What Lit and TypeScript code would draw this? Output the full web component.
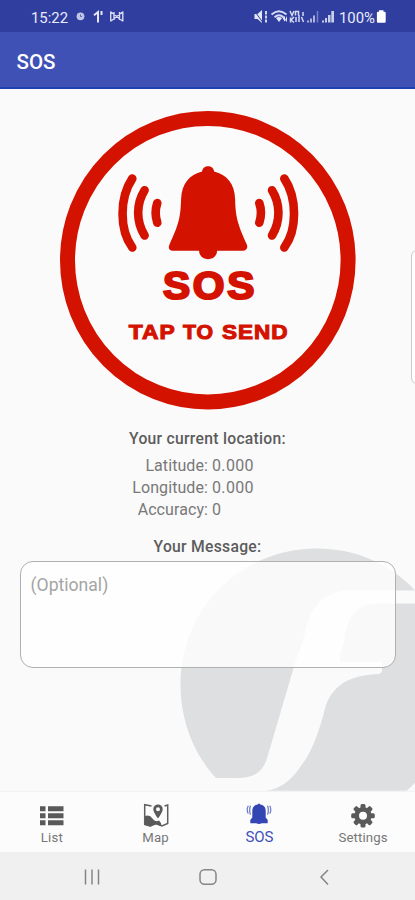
import { LitElement, html, css, svg } from "lit";
import { customElement, property } from "lit/decorators.js";
import { classMap } from "lit/directives/class-map.js";

@customElement("status-bar")
class StatusBar extends LitElement {
  static styles = css`
    :host { display: flex; height: 32px; background: #303f9f; color: #e8eaf8; }
    svg { display: block; width: 415px; height: 32px; }
    text { font: 400 15px Roboto, sans-serif; fill: #e9ebfa; }
  `;
  render() {
    return html`<svg viewBox="0 0 415 32" fill="#e4e7f8">
      <text x="31" y="22.5" textLength="37" lengthAdjust="spacingAndGlyphs">15:22</text>
      <circle cx="80.5" cy="16.3" r="3.9" opacity=".8" />
      <path d="M80.500 14.500v2h1.500" fill="none" stroke="#5966b4" />
      <path d="M94 15.2L98 12v10.5M101.5 11v4" fill="none" stroke="#e4e7f8" stroke-width="2" />
      <path d="M110.700 11.500v10M122.800 11.500v10M111 12l11.500 9M122.500 12L111 21M114 12v8M119.500 12v8" fill="none" stroke="#d5d9f1" stroke-width="1.4" />
      <path d="M254.500 14h3l4.500-4v13L257.500 19h-3z" />
      <path d="M254.500 11l8 11" stroke="#303f9f" stroke-width="1" fill="none" />
      <path d="M266 11v3.500M266 15.500v3M266 19.500v3" stroke="#e4e7f8" stroke-width="1.800" fill="none" />
      <path d="M271.500 14.500q7.500-6.500 15 0M274.500 17.200q4.500-4 9 0" stroke="#d5d9f1" stroke-width="1.900" fill="none" />
      <path d="M276 18q3-2 6 0l-3 4zM282.500 18l2.500-2v6zM287 16v6l-2-2z" />
      <path d="M290 11l2 4.500 2-4.500M295.500 15.500v-4h3v4M290.500 22.500v-5M291 20l3-3M291 20l3 2.500M296 17v5M299 15v7M301.500 17l2 5M303 12v4" stroke="#d5d9f1" stroke-width="1.500" fill="none" />
      <path d="M307 22.500h2v-2h-2zM310 22.500h2v-4h-2zM313 22.500h2v-7h-2z" opacity=".7" />
      <path d="M317.500 11v11.500" stroke="#7781c5" stroke-width="1.500" />
      <path d="M322 22.500h2v-2h-2zM325 22.500h2v-4.500h-2zM328 22.500h2.500v-7.500h-2.500zM331.300 22.500h2.700v-11.500h-2.700z" opacity=".85" />
      <text x="339" y="22.500" textLength="36" lengthAdjust="spacingAndGlyphs">100%</text>
      <path d="M379 10.300h4.500v1.500h1q1.200 0 1.200 1.200v8.800q0 1-1 1h-6.800q-1 0-1-1V13q0-1.200 1.200-1.200h.9z" fill="#fff" />
    </svg>`;
  }
}

@customElement("sos-button")
class SosButton extends LitElement {
  static styles = css`
    :host { display: block; width: 297px; height: 300px; }
    svg { display: block; overflow: visible; }
    text { font-family: "Liberation Sans", Arial, sans-serif; font-weight: 700; fill: #d41200; stroke: #d41200; }
    .big { font-size: 38.5px; stroke-width: 2.2px; letter-spacing: 2.5px; }
    .small { font-size: 20.8px; stroke-width: 1.1px; letter-spacing: .9px; }
  `;
  render() {
    const waves = svg`<path d="M132.500 178.500C119.500 198 119.500 230 132.500 247.500" />
      <path d="M144.800 190.200C136.200 204 136.200 221.500 144.800 235.500" />
      <path d="M157.500 203Q154.200 212.500 157.500 222.800" />`;
    return html`<svg width="297" height="300" viewBox="59.200 110 297 300" role="button" aria-label="SOS">
      <ellipse cx="208" cy="260.200" rx="140.300" ry="141.800" fill="#fbfbfb" stroke="#d41200" stroke-width="15" />
      <g fill="none" stroke="#d41200" stroke-width="8.600" stroke-linecap="round">
        ${waves}
        <g transform="translate(417 0) scale(-1 1)">${waves}</g>
      </g>
      <path fill="#d41200" d="M202.300 171.500C202.800 164.500 213.800 164.500 214.300 171.500C227 174.500 235 184 235.300 199C235.800 218 238 224 247 244.500C248.500 248 246.500 250.700 243 250.700H217.300C217 262 199.500 262 199.300 250.700H173C169.500 250.700 168 248 169.700 244.500C179 224 180.700 218 181.300 199C181.800 184 189.600 174.500 202.300 171.500Z" />
      <text class="big" x="163.200" y="298.600" textLength="94" lengthAdjust="spacingAndGlyphs">SOS</text>
      <text class="small" y="338.700"><tspan x="129" textLength="46.500" lengthAdjust="spacingAndGlyphs">TAP</tspan> <tspan x="183.300" textLength="31" lengthAdjust="spacingAndGlyphs">TO</tspan> <tspan x="222.300" textLength="66.500" lengthAdjust="spacingAndGlyphs">SEND</tspan></text>
    </svg>`;
  }
}

const icons: Record<string, unknown> = {
  list: svg`<path fill="#5a5a5a" d="M1 4.200h5.500v5H1zM9 4.200h15.500v5H9zM1 11.200h5.500v5H1zM9 11.200h15.500v5H9zM1 18.200h5.500v5H1zM9 18.200h15.500v5H9z" />`,
  map: svg`<path fill="none" stroke="#5f5f5f" stroke-width="1.500" d="M8.500 4L1.700 2.700V22.500L8 24.300M21.500 4L24.700 3V21.500L19 24L13 21.500" />
    <path fill="#5a5a5a" d="M2 14Q7 12.500 9.500 16.500T16 18.500Q18 20 18.500 24L13 22.500L8 24.500L2 22.700ZM15 2.400a4.700 4.700 0 0 1 4.700 4.700c0 3.500-4.700 9.500-4.700 9.500s-4.700-6-4.700-9.500A4.700 4.700 0 0 1 15 2.400zm0 2.800a2 2 0 1 0 0 4 2 2 0 0 0 0-4z" />`,
  sos: svg`<path fill="#3446b4" d="M11.800 2.500q1.200-1.800 2.400 0c4 .6 5.500 3 5.500 6.500v6.500l2 2.500v3.300h-6q-2.700 1.600-5.400 0h-6v-3.300l2-2.500V9c0-3.500 1.500-5.900 5.500-6.500z" />
    <path fill="none" stroke="#7480ca" stroke-width="1.300" stroke-linecap="round" d="M4.300 4.200q-1.300 4 0 8M2 4.200q-1.500 3.500 0 7M21.700 4.200q1.300 4 0 8M24 4.200q1.500 3.500 0 7" />`,
  settings: svg`<g fill="#5a5a5a"><path fill-rule="evenodd" d="M13 5a8.700 8.700 0 1 0 0 17.400A8.700 8.700 0 0 0 13 5zm0 4.700a4 4 0 1 1 0 8 4 4 0 0 1 0-8z" />
    ${[0, 45, 90, 135, 180, 225, 270, 315].map((a) => svg`<rect x="10.500" y="1.900" width="5" height="5" rx="1.500" transform="rotate(${a} 13 13.700)" />`)}</g>`,
};

@customElement("nav-tab")
class NavTab extends LitElement {
  @property() icon = "list";
  @property() label = "";
  @property({ type: Boolean }) active = false;
  static styles = css`
    :host { display: block; }
    .tab { display: flex; flex-direction: column; align-items: center; padding-top: 10px; color: #777; font: 13.2px/16px Roboto, sans-serif; letter-spacing: .15px; }
    .active { color: #3f51b5; font-size: 15px; letter-spacing: -.1px; }
    svg { width: 26px; height: 27px; display: block; }
    span { margin-top: 1px; }
    .active span { margin-top: 0; }
  `;
  render() {
    return html`<div class=${classMap({ tab: true, active: this.active })}>
      <svg viewBox="0 0 26 27">${icons[this.icon]}</svg><span>${this.label}</span>
    </div>`;
  }
}

@customElement("app-root")
class AppRoot extends LitElement {
  static styles = css`
    :host { display: flex; flex-direction: column; width: 415px; height: 900px; overflow: hidden; background: #fafafa; font-family: Roboto, sans-serif; color: #747474; }
    .header { box-sizing: border-box; height: 56.5px; flex: none; padding: 0 16.5px; background: #3f51b5; border-bottom: 2px solid #2140b2; color: #fff; font: 500 20.5px/60px Roboto, sans-serif; }
    .main { position: relative; flex: 1; display: flex; flex-direction: column; align-items: center; padding-top: 21.5px; min-height: 0; }
    .mark { position: absolute; right: 0; bottom: 0; width: 240px; height: 252px; }
    .drawer { position: absolute; left: 411px; top: 161px; width: 20px; height: 132px; border: 1.5px solid #c9c9c9; border-radius: 6px; background: #fff; }
    .heading { margin: 18px 0 0; font-weight: 500; font-size: 15.7px; line-height: 22px; color: #5c5c5c; letter-spacing: .28px; }
    .coords { display: grid; grid-template-columns: 208px 203px; column-gap: 4px; margin-top: 5px; font-size: 16px; line-height: 22px; color: #787878; }
    .key { text-align: right; letter-spacing: .08px; }
    .value { letter-spacing: .35px; }
    .message-title { margin-top: 15px; }
    .message { position: relative; box-sizing: border-box; width: 376px; height: 107px; margin-top: 3px; border: 1.5px solid #b0b0b0; border-radius: 13px; background: rgba(255,255,255,.82); padding: 12px 10px; font-size: 17.6px; line-height: 22px; color: #a4a4a4; }
    .tabs { height: 60px; flex: none; display: grid; grid-template-columns: repeat(4, 103.75px); background: #fcfcfc; box-shadow: 0 -1px 1px #f3f3f3; position: relative; }
    .system { height: 48px; flex: none; background: #f0f0f0; }
    .system svg { display: block; }
  `;
  render() {
    const coords = [["Latitude:", "0.000"], ["Longitude:", "0.000"], ["Accuracy:", "0"]];
    return html`
      <status-bar></status-bar>
      <div class="header">SOS</div>
      <div class="main">
        <svg class="mark" viewBox="175 540 240 252" fill="#dddfe0">
          <path d="M216 778C169 727 168 643 217 591C270 535 363 534 415 590.500H350C325 591 310 606 305 633C302 645 297 656 293 670L266.500 760C261 774 252 778 237 778Z" />
          <path d="M415 603.500H376C355 604 347 619 344 641C343 648 339 654 340 662H382V672L379 674C351 675 334 684 326 705C321 724 314 750 301.500 765C293 779 281 789 266 790.700H406.700L415 783Z" />
        </svg>
        <div class="drawer"></div>
        <sos-button></sos-button>
        <div class="heading">Your current location:</div>
        <div class="coords">${coords.map(([k, v]) => html`<span class="key">${k}</span><span class="value">${v}</span>`)}</div>
        <div class="heading message-title">Your Message:</div>
        <div class="message">(Optional)</div>
      </div>
      <div class="tabs">
        <nav-tab icon="list" label="List"></nav-tab>
        <nav-tab icon="map" label="Map"></nav-tab>
        <nav-tab icon="sos" label="SOS" active></nav-tab>
        <nav-tab icon="settings" label="Settings"></nav-tab>
      </div>
      <div class="system"><svg width="415" height="48" viewBox="0 0 415 48" fill="none" stroke="#858585" stroke-width="1.5">
        <path d="M85.500 17.500v15M92 17.500v15M98.500 17.500v15" />
        <rect x="200" y="17.700" width="16" height="14.600" rx="4.500" />
        <path d="M328 18l-7 7 7 7.500" />
      </svg></div>`;
  }
}
